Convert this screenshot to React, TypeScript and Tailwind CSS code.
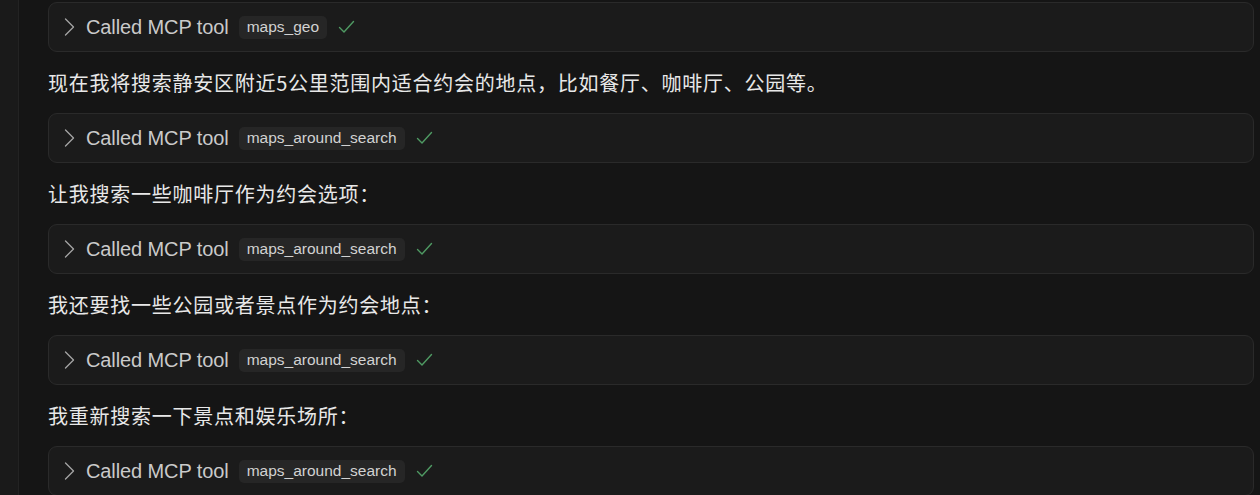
type Step =
  | { kind: "tool"; name: string }
  | { kind: "text"; text: string };

const steps: Step[] = [
  { kind: "tool", name: "maps_geo" },
  { kind: "text", text: "现在我将搜索静安区附近5公里范围内适合约会的地点，比如餐厅、咖啡厅、公园等。" },
  { kind: "tool", name: "maps_around_search" },
  { kind: "text", text: "让我搜索一些咖啡厅作为约会选项：" },
  { kind: "tool", name: "maps_around_search" },
  { kind: "text", text: "我还要找一些公园或者景点作为约会地点：" },
  { kind: "tool", name: "maps_around_search" },
  { kind: "text", text: "我重新搜索一下景点和娱乐场所：" },
  { kind: "tool", name: "maps_around_search" },
];

function ToolCall({ name }: { name: string }) {
  return (
    <div className="flex h-[50px] shrink-0 items-center rounded-[9px] border border-[#2a2a2a] bg-[#1b1b1b] pl-[15px]">
      <svg className="h-[18px] w-[11px]" viewBox="0 0 11 18" fill="none">
        <path d="M1.5 1 L9.5 9 L1.5 17" stroke="#a6a6a6" strokeWidth="1.3" strokeLinecap="round" strokeLinejoin="round" />
      </svg>
      <span className="ml-[11px] text-[20px] tracking-[-0.1px] text-[#cacaca] [font-family:'Liberation_Sans',Arial,sans-serif]">
        Called MCP tool
      </span>
      <span className="ml-[10px] rounded-[5px] bg-[#262626] px-[8px] py-[2.5px] text-[15.5px] leading-[18px] text-[#d2d2d2] [font-family:'Liberation_Sans',Arial,sans-serif]">
        {name}
      </span>
      <svg className="ml-[11px] h-[14px] w-[17px]" viewBox="0 0 17 14" fill="none">
        <path d="M1.5 7.5 L6 12 L15.5 1.5" stroke="#4f9a63" strokeWidth="1.4" strokeLinecap="round" strokeLinejoin="round" />
      </svg>
    </div>
  );
}

export default function App() {
  return (
    <div className="flex h-[495px] w-[1260px] overflow-hidden bg-[#151515]">
      <aside className="w-[19px] shrink-0 border-r border-[#232323] bg-[#1a1a1a]" />
      <main className="flex flex-1 flex-col pl-[29px] pr-[6px] pt-[2px]">
        {steps.map((step, i) =>
          step.kind === "tool" ? (
            <ToolCall key={i} name={step.name} />
          ) : (
            <p
              key={i}
              className="my-[16px] text-[20px] leading-[29px] tracking-[0.75px] text-[#e8e8e8] [font-family:'Noto_Sans_CJK_SC','Liberation_Sans',sans-serif]"
            >
              {step.text}
            </p>
          )
        )}
      </main>
    </div>
  );
}
